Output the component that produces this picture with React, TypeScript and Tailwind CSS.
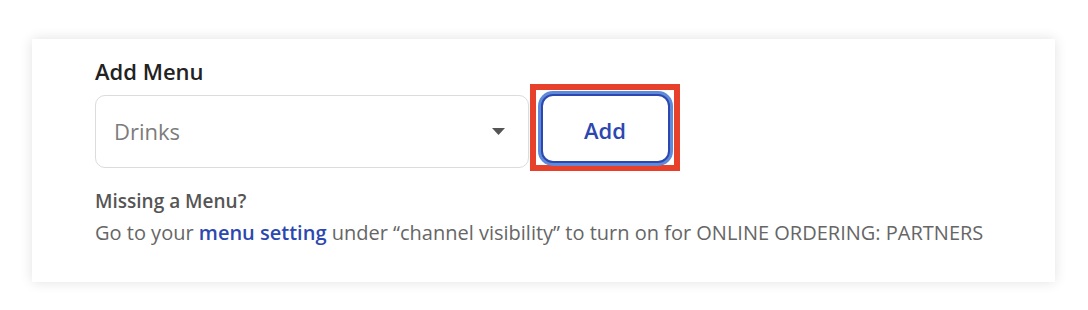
import React from 'react'

export default function App() {
  return (
    <div className="w-[1088px] h-[310px] bg-white pt-[39px] pl-[32px]" style={{ fontFamily: '"Open Sans", "Noto Sans", sans-serif' }}>
      <div className="w-[1023px] h-[243px] bg-white shadow-[0_0_12px_rgba(0,0,0,0.12)] pl-[63px] pt-[20px]">
        <h2 className="text-[22px] font-semibold text-[#222] leading-[24px]">Add Menu</h2>

        <div className="mt-[1px] flex items-start">
          <div className="mt-[11px] w-[434px] h-[73px] rounded-[10px] border border-[#dcdcdc] flex items-center justify-between pl-[18px] pr-[23px]">
            <span className="text-[22px] text-[#7c7c7c]">Drinks</span>
            <svg width="13" height="7" viewBox="0 0 13 7">
              <path d="M0 0 H13 L6.5 7 Z" fill="#555" />
            </svg>
          </div>

          <div className="ml-[1px] w-[150px] h-[87px] border-[6px] border-[#e8412b] flex items-center justify-center">
            <button className="mt-[2px] w-[129px] h-[69px] pt-[3px] rounded-[12px] border-[2px] border-[#2c48b0] ring-[3px] ring-[#5f8ad9] bg-white text-[22px] font-semibold text-[#2c48b0]">
              Add
            </button>
          </div>
        </div>

        <p className="mt-[18px] text-[19px] font-semibold text-[#555] leading-[24px]">Missing a Menu?</p>
        <p className="mt-[7px] text-[20px] text-[#666] leading-[26px]">
          Go to your <span className="font-semibold text-[#2c48b0]">menu setting</span> under “channel visibility” to turn on for ONLINE ORDERING: PARTNERS
        </p>
      </div>
    </div>
  )
}
